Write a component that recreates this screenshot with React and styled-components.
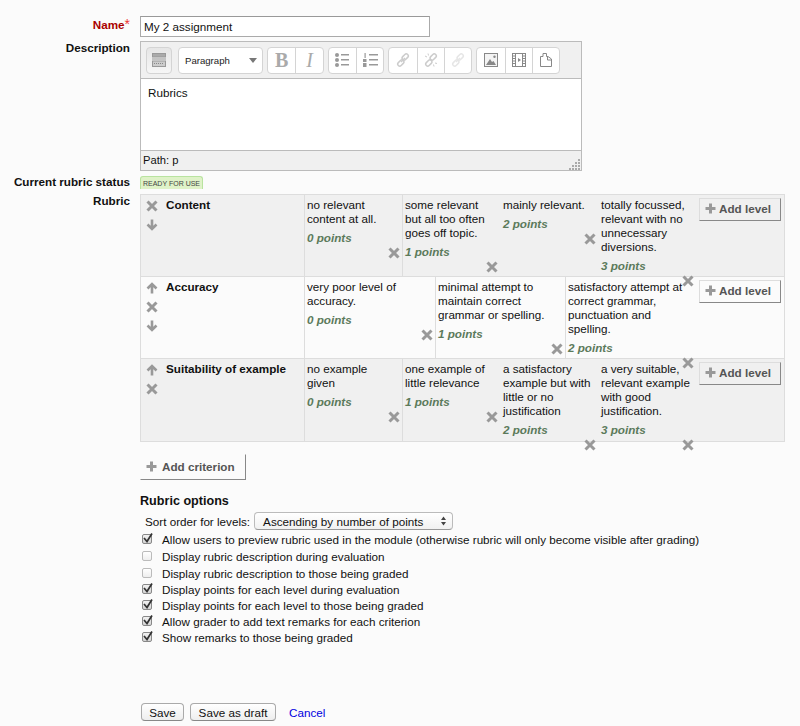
import React from 'react';
import styled, { createGlobalStyle } from 'styled-components';

const GlobalStyle = createGlobalStyle`
  html, body {
    margin: 0;
    background: #fbfbfb;
  }
  body {
    font-family: "Liberation Sans", Arial, sans-serif;
    font-size: 11.68px;
    color: #111;
  }
`;

const Page = styled.form`
  width: 800px;
  height: 726px;
  padding-top: 16px;
  box-sizing: border-box;
  overflow: hidden;
`;

const FormRow = styled.div`
  display: grid;
  grid-template-columns: 130px 1fr;
  column-gap: 10px;
  margin-bottom: ${(p) => p.$gap || 0}px;
`;

const Label = styled.div`
  text-align: right;
  font-weight: bold;
  line-height: 14px;
  padding-top: ${(p) => p.$top || 0}px;
  color: ${(p) => (p.$required ? '#aa0000' : '#111')};
`;

const Star = styled.span`
  color: #e33;
  font-weight: normal;
  font-size: 14px;
`;

const NameInput = styled.input`
  width: 290px;
  height: 21px;
  box-sizing: border-box;
  border: 1px solid #aaa;
  border-top-color: #999;
  padding: 0 3px;
  background: #fff;
  font: 11.68px "Liberation Sans", Arial, sans-serif;
  color: #111;
`;

const Editor = styled.div`
  width: 442px;
  height: 130px;
  box-sizing: border-box;
  border: 1px solid #bbb;
  display: flex;
  flex-direction: column;
  background: #f0f0f0;
`;

const Toolbar = styled.div`
  height: 36px;
  flex: none;
  display: flex;
  align-items: center;
  padding: 0 0 0 5px;
  border-bottom: 1px solid #bbb;
`;

const ToolGroup = styled.div`
  height: 27px;
  display: flex;
  box-sizing: border-box;
  margin-right: ${(p) => p.$gap ?? 4}px;
  border: 1px solid #d4d4d4;
  border-radius: 4px;
  background: ${(p) => p.$fill || '#fff'};
`;

const ToolButton = styled.div`
  width: 27.33px;
  box-sizing: border-box;
  display: flex;
  align-items: center;
  justify-content: center;
  & + & {
    border-left: 1px solid #d4d4d4;
  }
`;

const Toggler = styled(ToolButton)`
  width: 24px;
`;

const BoldGlyph = styled.span`
  font: bold 20px "Liberation Serif", serif;
  color: #aaa;
`;

const ItalicGlyph = styled.span`
  font: italic 20px "Liberation Serif", serif;
  color: #aaa;
`;

const FormatSelect = styled.div`
  width: 83px;
  display: flex;
  align-items: center;
  justify-content: space-between;
  padding: 0 5px 0 6px;
  box-sizing: border-box;
  font-size: 9.6px;
  color: #222;
`;

const Caret = styled.span`
  width: 0;
  height: 0;
  border-left: 4.5px solid transparent;
  border-right: 4.5px solid transparent;
  border-top: 5px solid #777;
`;

const EditorBody = styled.div`
  flex: 1;
  background: #fff;
  padding: 7px 7px;
  line-height: 14px;
  border-bottom: 1px solid #bbb;
`;

const StatusBar = styled.div`
  position: relative;
  height: 19px;
  flex: none;
  padding: 0 2px;
  line-height: 18px;
  font-size: 11.2px;
`;

const Grip = styled.svg`
  position: absolute;
  right: 0;
  bottom: 0;
`;

const Badge = styled.span`
  display: block;
  width: 63px;
  height: 13px;
  margin-top: 1px;
  box-sizing: border-box;
  border: 1px solid #b9e3a0;
  border-bottom: 0;
  border-radius: 3px 3px 0 0;
  background: #dff2c8;
  font-size: 7px;
  line-height: 13px;
  text-align: center;
  color: #444;
  white-space: nowrap;
`;

const Rubric = styled.div`
  width: 645px;
  box-sizing: border-box;
  border: 1px solid #ddd;
`;

const CriterionRow = styled.div`
  display: flex;
  height: ${(p) => p.$height}px;
  background: ${(p) => (p.$odd ? '#f0f0f0' : '#fbfbfb')};
  & + & {
    border-top: 1px solid #ddd;
  }
`;

const Controls = styled.div`
  width: 25px;
  flex: none;
  display: flex;
  flex-direction: column;
  align-items: center;
  padding: 5px 4px 0 0;
  box-sizing: border-box;
  gap: 7px;
`;

const ControlIcon = styled.svg`
  display: block;
  width: 12px;
  height: 12px;
  color: #999;
`;

const CriterionName = styled.div`
  width: 138px;
  flex: none;
  padding-top: 3px;
  font-weight: bold;
  line-height: 14px;
  white-space: nowrap;
`;

const LevelCell = styled.div`
  width: ${(p) => p.$width}px;
  flex: none;
  box-sizing: border-box;
  padding: 3px 2px 0 2px;
  display: flex;
  flex-direction: column;
  border-left: 1px solid ${(p) => (p.$line ? '#ddd' : 'transparent')};
`;

const Definition = styled.div`
  line-height: 14px;
  white-space: pre-line;
`;

const Points = styled.div`
  margin-top: 5px;
  font-weight: bold;
  font-style: italic;
  line-height: 14px;
  color: #5b7a5b;
`;

const RemoveLevel = styled.svg`
  display: block;
  flex: none;
  width: 12px;
  height: 12px;
  margin: 2px 0 0 auto;
  color: #999;
`;

const AddSlot = styled.div`
  flex: 1;
  padding: 3px 0 0 3px;
`;

const FlatButton = styled.div`
  display: flex;
  align-items: center;
  box-sizing: border-box;
  width: ${(p) => p.$width}px;
  height: ${(p) => p.$height}px;
  gap: ${(p) => p.$gap}px;
  padding: 0 0 ${(p) => p.$drop}px ${(p) => p.$left}px;
  border-right: 1px solid #888;
  border-bottom: 1px solid #888;
  border-top: 1px solid ${(p) => p.$edge};
  border-left: 1px solid ${(p) => p.$edge};
  font-weight: bold;
  color: #555;
`;

const PlusIcon = styled.svg`
  width: 11px;
  height: 11px;
  color: #999;
`;

const Heading = styled.h3`
  margin: 14px 0 3px;
  font-size: 12.6px;
  line-height: 15px;
  font-weight: bold;
`;

const SortRow = styled.div`
  display: flex;
  align-items: center;
  height: 18px;
  gap: 4px;
  padding-left: 5px;
  margin-bottom: 1px;
`;

const SortSelect = styled.div`
  width: 199px;
  height: 18px;
  box-sizing: border-box;
  display: flex;
  align-items: center;
  justify-content: space-between;
  padding: 0 5px 0 8px;
  border: 1px solid #bbb;
  border-bottom-color: #999;
  border-radius: 4px;
  background: linear-gradient(#fff, #f1f1f1);
`;

const OptionRow = styled.label`
  display: flex;
  align-items: center;
  height: 16px;
  gap: 10px;
  padding-left: 2px;
  margin-top: ${(p) => (p.$checked ? 0 : 1)}px;
  white-space: nowrap;
`;

const CheckBox = styled.span`
  width: 10px;
  height: 10px;
  box-sizing: border-box;
  flex: none;
  position: relative;
  border: 1px solid ${(p) => (p.$checked ? '#888' : '#bbb')};
  border-radius: 2px;
  background: ${(p) => (p.$checked ? 'linear-gradient(#f2f2f2, #d4d4d4)' : 'linear-gradient(#fff, #eee)')};
`;

const CheckMark = styled.svg`
  position: absolute;
  left: -1px;
  top: -3px;
`;

const Actions = styled.div`
  display: flex;
  align-items: center;
  gap: 6px;
  margin-top: 58px;
  padding-left: 141px;
`;

const PushButton = styled.button`
  height: 18px;
  width: ${(p) => p.$width}px;
  padding: 0;
  border: 1px solid #aaa;
  border-bottom-color: #888;
  border-radius: 4px;
  background: linear-gradient(#fff, #eee);
  font: 11.68px "Liberation Sans", Arial, sans-serif;
  color: #111;
`;

const CancelLink = styled.a`
  margin-left: 7px;
  color: #0000e0;
`;

const DeleteGlyph = ({ as: Svg = ControlIcon }) => (
  <Svg viewBox="0 0 12 12">
    <path d="M1.5 1.5 L10.5 10.5 M10.5 1.5 L1.5 10.5" stroke="currentColor" strokeWidth="3" fill="none" />
  </Svg>
);

const UpGlyph = () => (
  <ControlIcon viewBox="0 0 12 12">
    <path d="M6 11.5 V3 M1.5 6.5 L6 2 L10.5 6.5" stroke="currentColor" strokeWidth="2.6" fill="none" />
  </ControlIcon>
);

const DownGlyph = () => (
  <ControlIcon viewBox="0 0 12 12">
    <path d="M6 0.5 V9 M1.5 5.5 L6 10 L10.5 5.5" stroke="currentColor" strokeWidth="2.6" fill="none" />
  </ControlIcon>
);

const Plus = () => (
  <PlusIcon viewBox="0 0 11 11">
    <path d="M5.5 0.5 V10.5 M0.5 5.5 H10.5" stroke="currentColor" strokeWidth="3" fill="none" />
  </PlusIcon>
);

const TogglerIcon = () => (
  <svg width="14" height="14" viewBox="0 0 14 14" fill="none" stroke="#999">
    <rect x="0.5" y="0.5" width="13" height="3.5" fill="#aaa" />
    <path d="M0 6 H14" />
    <rect x="0.5" y="8" width="13" height="5.5" fill="#ccc" />
    <path d="M2 10.5 H12" stroke="#888" strokeDasharray="1 1" />
  </svg>
);

const BulletIcon = () => (
  <svg width="14" height="14" viewBox="0 0 14 14" fill="#999">
    <circle cx="2" cy="2" r="2" /><circle cx="2" cy="7" r="2" /><circle cx="2" cy="12" r="2" />
    <rect x="6" y="1" width="8" height="1.5" /><rect x="6" y="6" width="8" height="1.5" /><rect x="6" y="11" width="8" height="1.5" />
  </svg>
);

const NumberIcon = () => (
  <svg width="15" height="14" viewBox="0 0 15 14" fill="#999">
    <rect x="1.5" y="0" width="1.2" height="5" /><rect x="0" y="6" width="3.5" height="3" />
    <rect x="0" y="10" width="3.5" height="4" />
    <rect x="6" y="1" width="9" height="1.5" /><rect x="6" y="6" width="9" height="1.5" /><rect x="6" y="11" width="9" height="1.5" />
  </svg>
);

const ChainIcon = ({ color, broken }) => (
  <svg width="14" height="14" viewBox="0 0 14 14" fill="none" stroke={color} strokeWidth="1.5">
    <rect x="7.2" y="0.5" width="4" height="7" rx="2" transform="rotate(45 9.2 4)" />
    <rect x="2.8" y="6.5" width="4" height="7" rx="2" transform="rotate(45 4.8 10)" />
    {broken
      ? <path d="M1 3 L3 4 M4 0.5 L4.5 2.5 M10 13.5 L9.5 11.5 M13 10.5 L11 10" strokeWidth="1" />
      : <path d="M5 9 L9 5" />}
  </svg>
);

const ImageIcon = () => (
  <svg width="14" height="14" viewBox="0 0 14 14">
    <rect x="0.5" y="0.5" width="13" height="13" fill="#f4f4f4" stroke="#888" />
    <path d="M2 12 L6 6 L8 9 L9.5 8 L12 12 Z" fill="#888" />
    <circle cx="10.5" cy="3.8" r="1.2" fill="#888" />
  </svg>
);

const FilmIcon = () => (
  <svg width="14" height="14" viewBox="0 0 14 14" fill="none" stroke="#888">
    <rect x="0.5" y="0.5" width="13" height="13" />
    <path d="M3.5 0.5 V13.5 M10.5 0.5 V13.5 M0.5 3 H3.5 M0.5 5.5 H3.5 M0.5 8 H3.5 M0.5 10.5 H3.5 M10.5 3 H13.5 M10.5 5.5 H13.5 M10.5 8 H13.5 M10.5 10.5 H13.5" />
    <path d="M6 5 L9 7 L6 9 Z" fill="#888" stroke="none" />
  </svg>
);

const PasteIcon = () => (
  <svg width="12" height="14" viewBox="0 0 12 14" fill="none" stroke="#888">
    <path d="M0.5 3.5 H3 V0.5 H6.5 V3.5 H8 L11.5 6 V13.5 H0.5 Z" />
    <path d="M7.5 4 V7 H11" />
  </svg>
);

const GripIcon = () => (
  <Grip width="12" height="12" viewBox="0 0 12 12" fill="#aaa">
    {[[9, 1], [6, 4], [9, 4], [3, 7], [6, 7], [9, 7], [0, 10], [3, 10], [6, 10], [9, 10]].map(([x, y]) => (
      <rect key={`${x}-${y}`} x={x} y={y} width="2" height="2" />
    ))}
  </Grip>
);

const SortArrows = () => (
  <svg width="7" height="10" viewBox="0 0 7 10" fill="#444">
    <path d="M3.5 0.5 L6 4 H1 Z M3.5 9.5 L6 6 H1 Z" />
  </svg>
);

const criteria = [
  {
    name: 'Content',
    height: 81,
    controls: ['delete', 'down'],
    levels: [
      { width: 98, line: true, text: 'no relevant\ncontent at all.', points: 0 },
      { width: 98, line: true, text: 'some relevant\nbut all too often\ngoes off topic.', points: 1 },
      { width: 98, text: 'mainly relevant.', points: 2 },
      { width: 98, text: 'totally focussed,\nrelevant with no\nunnecessary\ndiversions.', points: 3 },
    ],
  },
  {
    name: 'Accuracy',
    height: 81,
    controls: ['up', 'delete', 'down'],
    levels: [
      { width: 131, line: true, text: 'very poor level of\naccuracy.', points: 0 },
      { width: 130, line: true, text: 'minimal attempt to\nmaintain correct\ngrammar or spelling.', points: 1 },
      { width: 131, line: true, text: 'satisfactory attempt at\ncorrect grammar,\npunctuation and\nspelling.', points: 2 },
    ],
  },
  {
    name: 'Suitability of example',
    height: 82,
    controls: ['up', 'delete'],
    levels: [
      { width: 98, line: true, text: 'no example\ngiven', points: 0 },
      { width: 98, line: true, text: 'one example of\nlittle relevance', points: 1 },
      { width: 98, text: 'a satisfactory\nexample but with\nlittle or no\njustification', points: 2 },
      { width: 98, text: 'a very suitable,\nrelevant example\nwith good\njustification.', points: 3 },
    ],
  },
];

const options = [
  { label: 'Allow users to preview rubric used in the module (otherwise rubric will only become visible after grading)', checked: true },
  { label: 'Display rubric description during evaluation', checked: false },
  { label: 'Display rubric description to those being graded', checked: false },
  { label: 'Display points for each level during evaluation', checked: true },
  { label: 'Display points for each level to those being graded', checked: true },
  { label: 'Allow grader to add text remarks for each criterion', checked: true },
  { label: 'Show remarks to those being graded', checked: true },
];

const controlIcons = { up: UpGlyph, down: DownGlyph, delete: DeleteGlyph };

function App() {
  return (
    <Page>
      <GlobalStyle />
      <FormRow $gap={4}>
        <Label $required $top={1}>Name<Star>*</Star></Label>
        <NameInput defaultValue="My 2 assignment" />
      </FormRow>
      <FormRow $gap={4}>
        <Label>Description</Label>
        <Editor>
          <Toolbar>
            <ToolGroup $gap={6} $fill="linear-gradient(#e6e6e6, #f6f6f6)">
              <Toggler><TogglerIcon /></Toggler>
            </ToolGroup>
            <ToolGroup>
              <FormatSelect>Paragraph<Caret /></FormatSelect>
            </ToolGroup>
            <ToolGroup>
              <ToolButton><BoldGlyph>B</BoldGlyph></ToolButton>
              <ToolButton><ItalicGlyph>I</ItalicGlyph></ToolButton>
            </ToolGroup>
            <ToolGroup>
              <ToolButton><BulletIcon /></ToolButton>
              <ToolButton><NumberIcon /></ToolButton>
            </ToolGroup>
            <ToolGroup>
              <ToolButton><ChainIcon color="#ccc" /></ToolButton>
              <ToolButton><ChainIcon color="#ccc" broken /></ToolButton>
              <ToolButton><ChainIcon color="#e6e6e6" /></ToolButton>
            </ToolGroup>
            <ToolGroup>
              <ToolButton><ImageIcon /></ToolButton>
              <ToolButton><FilmIcon /></ToolButton>
              <ToolButton><PasteIcon /></ToolButton>
            </ToolGroup>
          </Toolbar>
          <EditorBody>Rubrics</EditorBody>
          <StatusBar>Path: p<GripIcon /></StatusBar>
        </Editor>
      </FormRow>
      <FormRow $gap={5}>
        <Label>Current rubric status</Label>
        <Badge>READY FOR USE</Badge>
      </FormRow>
      <FormRow $gap={12}>
        <Label>Rubric</Label>
        <Rubric>
          {criteria.map((criterion, index) => (
            <CriterionRow key={criterion.name} $odd={index % 2 === 0} $height={criterion.height}>
              <Controls>
                {criterion.controls.map((kind) => {
                  const Icon = controlIcons[kind];
                  return <Icon key={kind} />;
                })}
              </Controls>
              <CriterionName>{criterion.name}</CriterionName>
              {criterion.levels.map((level) => (
                <LevelCell key={level.text} $width={level.width} $line={level.line}>
                  <Definition>{level.text}</Definition>
                  <Points>{level.points} points</Points>
                  <DeleteGlyph as={RemoveLevel} />
                </LevelCell>
              ))}
              <AddSlot>
                <FlatButton $width={82} $height={23} $left={5} $gap={3} $drop={2} $edge="#ddd"><Plus />Add level</FlatButton>
              </AddSlot>
            </CriterionRow>
          ))}
        </Rubric>
      </FormRow>
      <FormRow>
        <div />
        <div>
          <FlatButton $width={106} $height={26} $left={5} $gap={5} $drop={2} $edge="transparent"><Plus />Add criterion</FlatButton>
          <Heading>Rubric options</Heading>
          <SortRow>
            Sort order for levels:
            <SortSelect>Ascending by number of points<SortArrows /></SortSelect>
          </SortRow>
          {options.map((option) => (
            <OptionRow key={option.label} $checked={option.checked}>
              <CheckBox $checked={option.checked}>
                {option.checked && (
                  <CheckMark width="11" height="12" viewBox="0 0 11 12">
                    <path d="M2 6 L5 9.5 L10 1.5" stroke="#333" strokeWidth="1.7" fill="none" />
                  </CheckMark>
                )}
              </CheckBox>
              {option.label}
            </OptionRow>
          ))}
        </div>
      </FormRow>
      <Actions>
        <PushButton type="button" $width={43}>Save</PushButton>
        <PushButton type="button" $width={86}>Save as draft</PushButton>
        <CancelLink>Cancel</CancelLink>
      </Actions>
    </Page>
  );
}

export default App;
